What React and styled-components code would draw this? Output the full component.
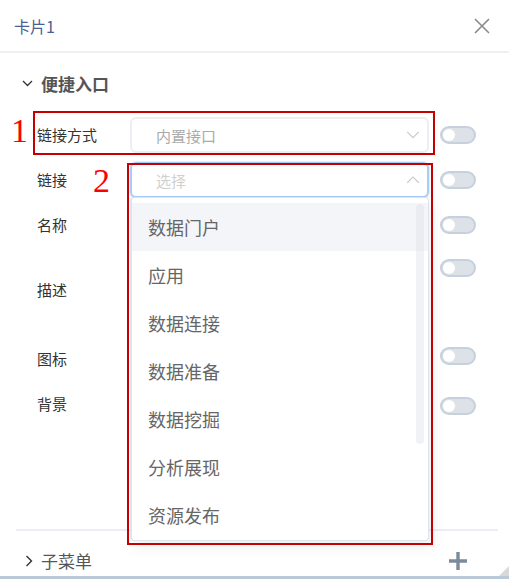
import React from 'react'
import styled, { createGlobalStyle } from 'styled-components'

const GlobalStyle = createGlobalStyle`
  html, body {
    margin: 0;
    padding: 0;
    background: #fff;
  }
  body {
    font-family: "Noto Sans CJK SC", "Noto Sans", sans-serif;
  }
`

const items = ['数据门户', '应用', '数据连接', '数据准备', '数据挖掘', '分析展现', '资源发布']

const Chevron = ({ dir = 'down', size = 14, color = '#c8c8c8', width = 1.2 }) => (
  <svg width={size} height={size * 0.55} viewBox="0 0 14 8" fill="none">
    {dir === 'down' && <path d="M1 1l6 6 6-6" stroke={color} strokeWidth={width} />}
    {dir === 'up' && <path d="M1 7l6-6 6 6" stroke={color} strokeWidth={width} />}
  </svg>
)

const App = () => (
  <>
    <GlobalStyle />
    <Panel>
      <Header>
        <Title>卡片1</Title>
        <svg width="16" height="16" viewBox="0 0 16 16">
          <path d="M1 1l14 14M15 1L1 15" stroke="#8a8a8a" strokeWidth="1.6" />
        </svg>
      </Header>

      <SectionHead>
        <svg width="11" height="7" viewBox="0 0 11 7" fill="none">
          <path d="M1 1l4.5 4.5L10 1" stroke="#333" strokeWidth="1.3" />
        </svg>
        <SectionTitle bold>便捷入口</SectionTitle>
      </SectionHead>

      <Form>
        <Row>
          <Label>链接方式</Label>
          <Select>
            <SelectText>内置接口</SelectText>
            <Chevron dir="down" />
          </Select>
          <Toggle />
        </Row>
        <Row>
          <Label>链接</Label>
          <Select active>
            <SelectText placeholder>选择</SelectText>
            <Chevron dir="up" />
          </Select>
          <Toggle />
        </Row>
        <Row>
          <Label>名称</Label>
          <Slot />
          <Toggle />
        </Row>
        <Row height={80} align="flex-start">
          <Label offset={28}>描述</Label>
          <Slot />
          <Toggle offset={7} />
        </Row>
        <Row>
          <Label>图标</Label>
          <Slot />
          <Toggle offset={-6} />
        </Row>
        <Row>
          <Label>背景</Label>
          <Slot />
          <Toggle offset={4} />
        </Row>
      </Form>

      <Divider />

      <FooterRow>
        <SectionHead as="div" flat>
          <svg width="8" height="12" viewBox="0 0 8 12" fill="none">
            <path d="M1.5 1l5 5-5 5" stroke="#333" strokeWidth="1.4" />
          </svg>
          <SectionTitle>子菜单</SectionTitle>
        </SectionHead>
        <svg width="20" height="20" viewBox="0 0 20 20">
          <path d="M10 1v18M1 10h18" stroke="#7b8b9a" strokeWidth="3.4" />
        </svg>
      </FooterRow>

      <BottomEdge />
      <Resizer />

      <Menu>
        {items.map((it, i) => (
          <MenuItem key={it} hovered={i === 0}>{it}</MenuItem>
        ))}
        <Scrollbar />
      </Menu>

      <Mark top={111} left={33} w={402} h={44} />
      <Mark top={163} left={127} w={306} h={382} />
      <Num top={112} left={11}>1</Num>
      <Num top={162} left={93}>2</Num>
    </Panel>
  </>
)

const Panel = styled.div`
  position: relative;
  width: 509px;
  height: 579px;
  overflow: hidden;
  background: #fff;
`

const Header = styled.div`
  height: 51px;
  padding: 0 19px 0 14px;
  display: flex;
  align-items: center;
  justify-content: space-between;
  border-bottom: 2px solid #eeeff1;
`

const Title = styled.div`
  font-size: 16px;
  color: #4a5f92;
`

const SectionHead = styled.div`
  display: flex;
  align-items: center;
  gap: 8px;
  padding: ${p => (p.flat ? '0' : '17px 0 0 22px')};
  height: ${p => (p.flat ? 'auto' : '26px')};
`

const SectionTitle = styled.span`
  font-size: 17px;
  font-weight: ${p => (p.bold ? 700 : 400)};
  color: #555;
`

const Form = styled.div`
  display: flex;
  flex-direction: column;
  gap: 9px;
  padding: 21px 0 0 37px;
`

const Row = styled.div`
  display: flex;
  align-items: ${p => p.align || 'center'};
  height: ${p => p.height || 36}px;
`

const Label = styled.div`
  width: 93px;
  font-size: 15px;
  line-height: 20px;
  color: #333;
  margin-top: ${p => p.offset || 0}px;
`

const Select = styled.div`
  box-sizing: border-box;
  width: 299px;
  height: 36px;
  display: flex;
  align-items: center;
  justify-content: space-between;
  padding: 0 7px 0 24px;
  border: 2px solid ${p => (p.active ? '#a6cdf6' : '#eceef4')};
  border-radius: 6px;
  box-shadow: ${p => (p.active ? '0 0 0 1px #e3efff' : 'none')};
`

const SelectText = styled.span`
  font-size: 15px;
  color: ${p => (p.placeholder ? '#cfcfcf' : '#aaaaaa')};
`

const Slot = styled.div`
  width: 299px;
`

const Toggle = styled.div`
  position: relative;
  box-sizing: border-box;
  width: 36px;
  height: 18px;
  margin-left: 11px;
  margin-top: ${p => p.offset || 0}px;
  border: 2px solid #c6d1dd;
  border-radius: 9px;
  background: #dde1e8;
  &::after {
    content: '';
    position: absolute;
    left: 1px;
    top: 1px;
    width: 12px;
    height: 12px;
    border-radius: 50%;
    background: #fff;
  }
`

const Divider = styled.div`
  margin: 107px 11px 0 16px;
  height: 2px;
  background: #eceef4;
`

const FooterRow = styled.div`
  display: flex;
  align-items: center;
  justify-content: space-between;
  padding: 17px 41px 0 25px;
`

const BottomEdge = styled.div`
  position: absolute;
  left: 0;
  right: 0;
  bottom: 0;
  height: 3px;
  background: #b9c9d8;
`

const Resizer = styled.div`
  position: absolute;
  right: 0;
  bottom: 3px;
  width: 0;
  height: 0;
  border-left: 10px solid transparent;
  border-bottom: 10px solid #d8d8d8;
`

const Menu = styled.div`
  position: absolute;
  top: 197px;
  left: 130px;
  box-sizing: border-box;
  width: 299px;
  height: 344px;
  padding: 5px 0;
  background: #fff;
  border: 1px solid #dfe3ee;
  border-left-width: 2px;
  border-radius: 4px;
  box-shadow: 4px 6px 14px rgba(0, 0, 0, 0.07);
`

const MenuItem = styled.div`
  height: 48px;
  display: flex;
  align-items: center;
  padding-left: 16px;
  font-size: 18px;
  color: #666;
  background: ${p => (p.hovered ? '#f4f5f9' : 'transparent')};
`

const Scrollbar = styled.div`
  position: absolute;
  top: 6px;
  right: 4px;
  width: 8px;
  height: 240px;
  border-radius: 4px;
  background: rgba(225, 227, 233, 0.45);
`

const Mark = styled.div`
  position: absolute;
  top: ${p => p.top}px;
  left: ${p => p.left}px;
  width: ${p => p.w}px;
  height: ${p => p.h}px;
  box-sizing: border-box;
  border: 2px solid #c40000;
  pointer-events: none;
`

const Num = styled.div`
  position: absolute;
  top: ${p => p.top}px;
  left: ${p => p.left}px;
  font-family: "Liberation Serif", "DejaVu Serif", serif;
  font-size: 34px;
  line-height: 38px;
  color: #ff0000;
`

export default App
